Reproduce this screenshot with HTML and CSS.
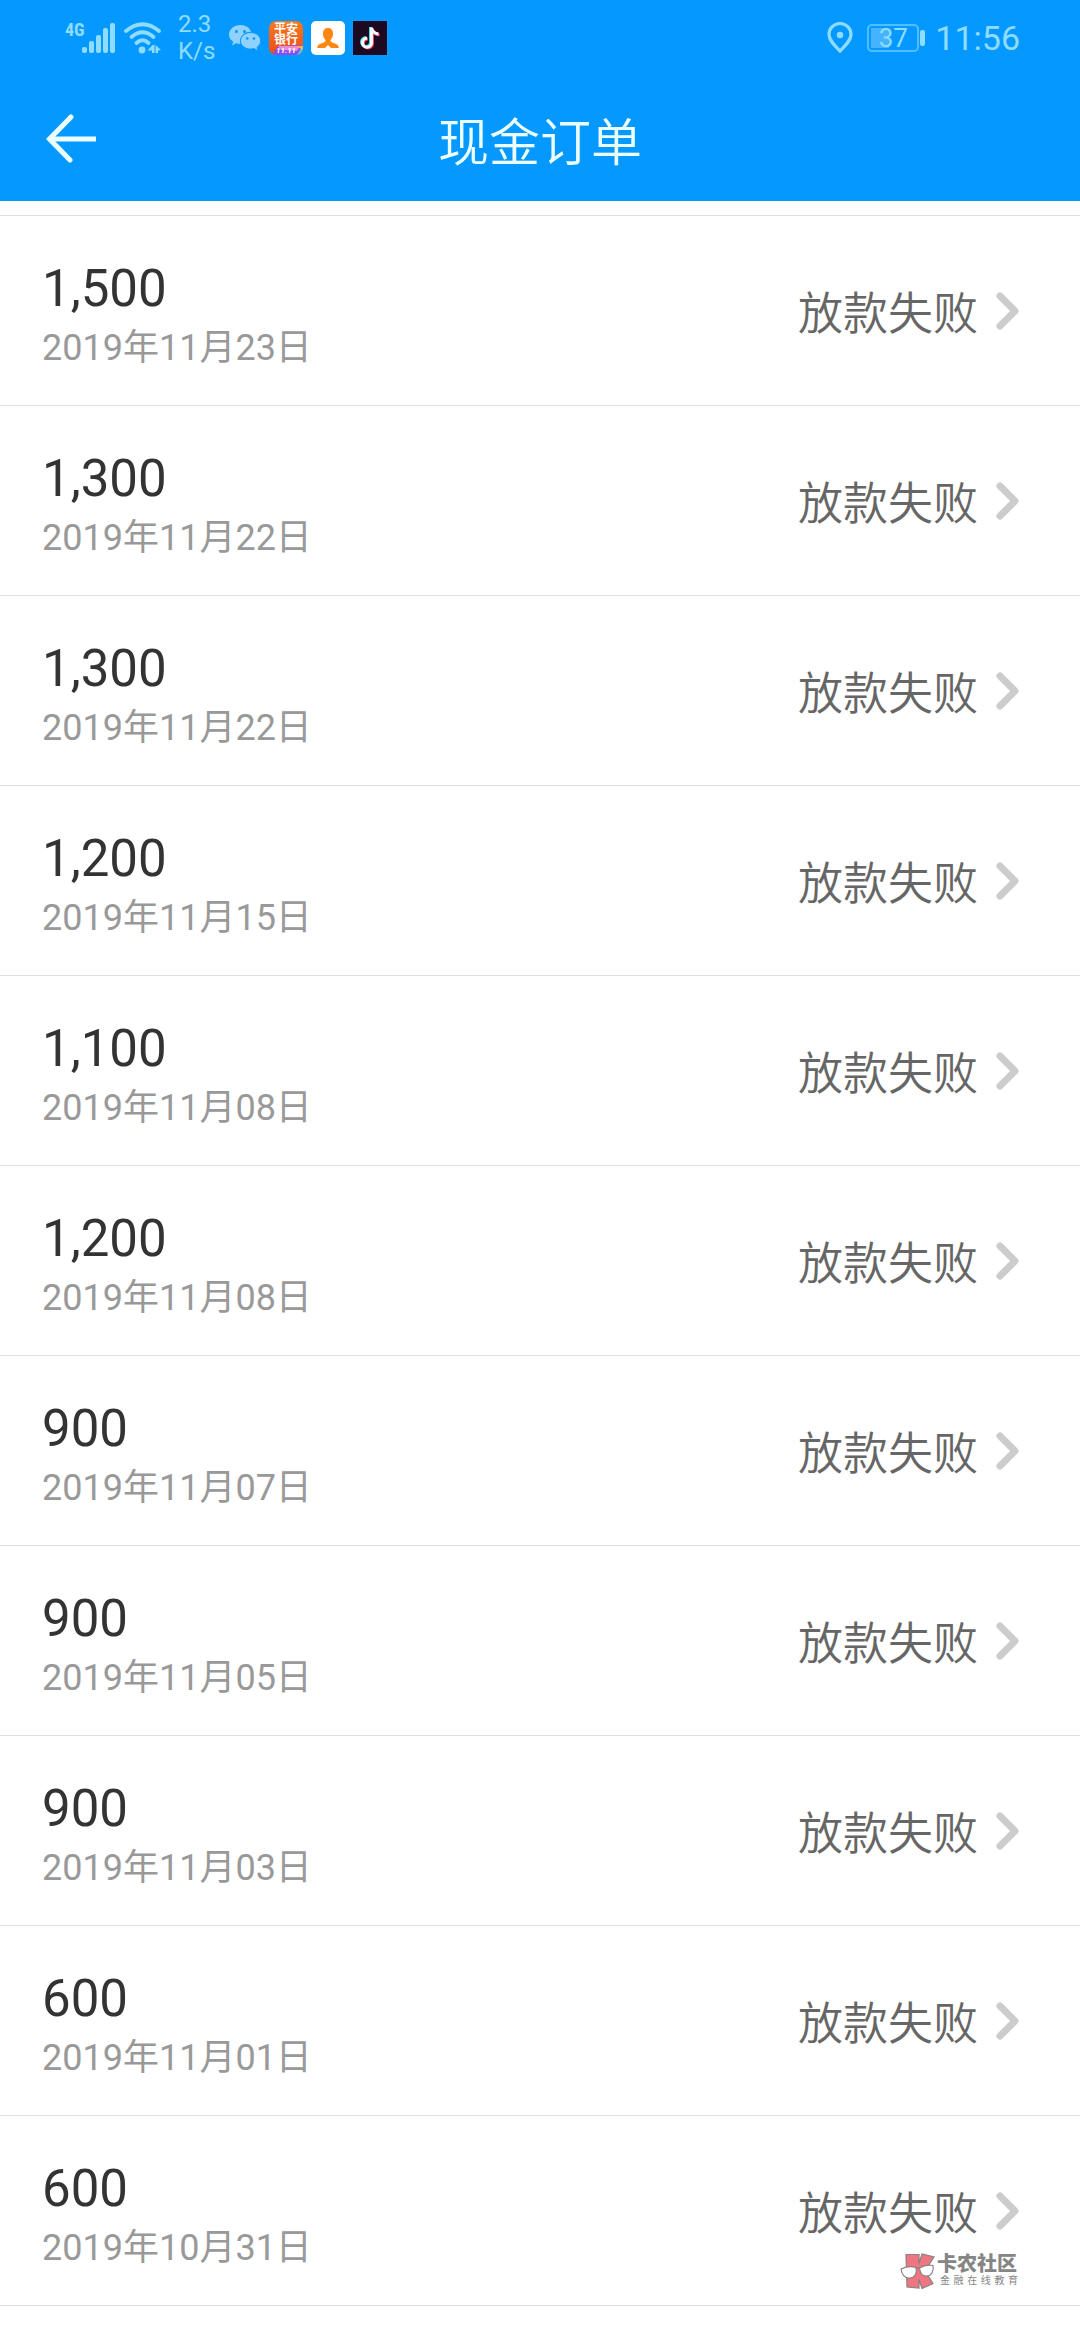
FILE: index.html
```html
<!DOCTYPE html>
<html lang="zh-CN">
<head>
<meta charset="utf-8">
<meta name="viewport" content="width=device-width, initial-scale=1">
<title>现金订单</title>
<link rel="stylesheet" href="styles.css">
</head>
<body>
<header class="top">
  <div class="status-bar">
    <div class="status-left">
      <div class="signal">
        <span class="network">4G</span>
        <svg width="34" height="32" viewBox="0 0 34 32" fill="currentColor" aria-hidden="true">
          <rect x="0" y="25" width="5" height="6" rx="2"/><rect x="7" y="19" width="5" height="12" rx="2"/><rect x="14" y="13" width="5" height="18" rx="2"/><rect x="21" y="6" width="5" height="25" rx="2"/><rect x="28" y="1" width="5" height="30" rx="2"/>
        </svg>
      </div>
      <svg class="wifi" width="38" height="32" viewBox="0 0 38 32" aria-hidden="true">
        <g fill="none" stroke="currentColor" stroke-width="3.800" stroke-linecap="round"><path d="M2 9Q18.500-4.500 35 9"/><path d="M7.500 15Q18.500 5.500 29.500 15"/><path d="M12.500 21Q18.500 15.500 24.500 21"/></g>
        <g fill="currentColor"><circle cx="18" cy="28" r="3.400"/><path d="M23.500 28.500l5-5.500h2v8h-2.500v-2.500zM31.500 23l5.500 5-3 .5V31h-2.500z"/></g>
      </svg>
      <div class="speed">2.3<br>K/s</div>
      <div class="app-icons">
        <svg class="wechat" width="32" height="28" viewBox="0 0 32 28" aria-hidden="true">
          <path fill="#8fd2ff" d="M11.500 1C5.200 1 0 5.200 0 10.500c0 3 1.700 5.600 4.200 7.300L3 21.500l4.200-2.200c1.400.4 2.800.6 4.300.6A9.500 9.500 0 0 1 22 8C21 4 16.700 1 11.500 1z"/>
          <path fill="#8fd2ff" stroke="#0599ff" stroke-width="1" d="M21.500 8.500c-5.500 0-10 3.700-10 8.300s4.500 8.300 10 8.300c1.200 0 2.400-.2 3.500-.5l4 2.400-1-3.600c2.200-1.500 3.700-3.900 3.700-6.600 0-4.600-4.600-8.300-10.200-8.300z"/>
          <g fill="#0599ff"><circle cx="7.500" cy="7.500" r="1.500"/><circle cx="15.500" cy="7.500" r="1.500"/><circle cx="18.300" cy="14.500" r="1.300"/><circle cx="25" cy="14.500" r="1.300"/></g>
        </svg>
        <svg width="34" height="34" viewBox="0 0 34 34" aria-hidden="true">
          <defs><linearGradient id="bank" x1="0" y1="0" x2="0" y2="1"><stop offset="0" stop-color="#f47a20"/><stop offset="1" stop-color="#f04c16"/></linearGradient><clipPath id="bank-shape"><rect width="34" height="34" rx="7"/></clipPath></defs>
          <g clip-path="url(#bank-shape)"><rect width="34" height="34" fill="url(#bank)"/><path fill="#8a4df0" d="M3 34l6-9 25-1v10z"/><path fill="#ee8ad0" d="M9 25h22l-3 5-16-1z"/><path fill="#50c8dc" d="M34 24l-6 10h6z"/><path fill="#ffb640" d="M27 25h7v4z"/></g>
          <g fill="#fff" font-weight="700" text-anchor="middle"><text class="bank-name" x="17" y="12">平安</text><text class="bank-name" x="17" y="23">银行</text><text class="bank-sale" x="17" y="32">11.11</text></g>
        </svg>
        <svg width="34" height="34" viewBox="0 0 34 34" aria-hidden="true">
          <rect width="34" height="34" rx="5" fill="#fff"/>
          <path fill="#ff8610" d="M17 7c3 0 5 2 5 5.500 0 3-1 5-2.500 6.500 0 2 1.500 2.500 4.500 3.500 2.500.8 3.600 2 3.800 4.500H20l-3-3-3 3H6.200c.2-2.500 1.300-3.700 3.800-4.500 3-1 4.500-1.500 4.500-3.500C13 17.500 12 15.500 12 12.500 12 9 14 7 17 7z"/>
        </svg>
        <svg width="34" height="34" viewBox="0 0 34 34" aria-hidden="true">
          <rect width="34" height="34" fill="#1d0a20"/>
          <g fill="none" stroke-width="3"><path stroke="#35e0e2" d="M17.500 6v15a4.500 4.500 0 1 1-4.500-4.500M17.500 7c.8 3.500 3 5.500 7 6"/><path stroke="#f5405c" d="M19.500 7.500V22.500a4.500 4.500 0 1 1-4.500-4.500M19.500 8c.8 3.500 3 5.500 7 6"/><path stroke="#fff" d="M18.500 6.500v15.200a4.500 4.500 0 1 1-4.500-4.500M18.500 7c.8 3.500 3 5.500 7 6"/></g>
        </svg>
      </div>
    </div>
    <div class="status-right">
      <svg width="26" height="32" viewBox="0 0 26 32" aria-hidden="true"><path fill="none" stroke="currentColor" stroke-width="3.200" d="M13 29C7.500 23.500 2 18.500 2 12.500a11 11 0 0 1 22 0c0 6-5.500 11-11 16.500z"/><circle cx="13" cy="13" r="3.200" fill="currentColor"/></svg>
      <div class="battery"><span class="battery-level">37</span></div>
      <time class="clock">11:56</time>
    </div>
  </div>
  <div class="title-bar">
    <button class="back" type="button" aria-label="返回">
      <svg width="50" height="50" viewBox="0 0 50 50" fill="none" stroke="#ecffff" stroke-width="5" aria-hidden="true"><path stroke-linecap="round" d="M25 3L3.500 25 24 46"/><path d="M4 25h46"/></svg>
    </button>
    <h1 class="title">现金订单</h1>
  </div>
</header>
<main>
  <ul class="orders">
    <li><a class="order" href="#"><span class="info"><span class="amount">1,500</span><span class="date">2019年11月23日</span></span><span class="state">放款失败</span><svg class="chevron" viewBox="0 0 24 38"><path d="M4 4l15 15L4 34"/></svg></a></li>
    <li><a class="order" href="#"><span class="info"><span class="amount">1,300</span><span class="date">2019年11月22日</span></span><span class="state">放款失败</span><svg class="chevron" viewBox="0 0 24 38"><path d="M4 4l15 15L4 34"/></svg></a></li>
    <li><a class="order" href="#"><span class="info"><span class="amount">1,300</span><span class="date">2019年11月22日</span></span><span class="state">放款失败</span><svg class="chevron" viewBox="0 0 24 38"><path d="M4 4l15 15L4 34"/></svg></a></li>
    <li><a class="order" href="#"><span class="info"><span class="amount">1,200</span><span class="date">2019年11月15日</span></span><span class="state">放款失败</span><svg class="chevron" viewBox="0 0 24 38"><path d="M4 4l15 15L4 34"/></svg></a></li>
    <li><a class="order" href="#"><span class="info"><span class="amount">1,100</span><span class="date">2019年11月08日</span></span><span class="state">放款失败</span><svg class="chevron" viewBox="0 0 24 38"><path d="M4 4l15 15L4 34"/></svg></a></li>
    <li><a class="order" href="#"><span class="info"><span class="amount">1,200</span><span class="date">2019年11月08日</span></span><span class="state">放款失败</span><svg class="chevron" viewBox="0 0 24 38"><path d="M4 4l15 15L4 34"/></svg></a></li>
    <li><a class="order" href="#"><span class="info"><span class="amount">900</span><span class="date">2019年11月07日</span></span><span class="state">放款失败</span><svg class="chevron" viewBox="0 0 24 38"><path d="M4 4l15 15L4 34"/></svg></a></li>
    <li><a class="order" href="#"><span class="info"><span class="amount">900</span><span class="date">2019年11月05日</span></span><span class="state">放款失败</span><svg class="chevron" viewBox="0 0 24 38"><path d="M4 4l15 15L4 34"/></svg></a></li>
    <li><a class="order" href="#"><span class="info"><span class="amount">900</span><span class="date">2019年11月03日</span></span><span class="state">放款失败</span><svg class="chevron" viewBox="0 0 24 38"><path d="M4 4l15 15L4 34"/></svg></a></li>
    <li><a class="order" href="#"><span class="info"><span class="amount">600</span><span class="date">2019年11月01日</span></span><span class="state">放款失败</span><svg class="chevron" viewBox="0 0 24 38"><path d="M4 4l15 15L4 34"/></svg></a></li>
    <li><a class="order" href="#"><span class="info"><span class="amount">600</span><span class="date">2019年10月31日</span></span><span class="state">放款失败</span><svg class="chevron" viewBox="0 0 24 38"><path d="M4 4l15 15L4 34"/></svg></a></li>
  </ul>
</main>
<div class="watermark">
  <svg width="36" height="36" viewBox="0 0 36 36" stroke="#8a8183" stroke-width="1.200" aria-hidden="true">
    <path fill="#ee7680" d="M6 1.500h13v9l3-9.500 12 3-9 14 8 12.500-11 5-3-9v8.500L7 34z"/>
    <path fill="#fff" d="M1 16c4-2 10-3 15-1.500 1.500 5-1 10-6 10.500S2 22 1 16zM19.500 15c4-2.500 9-3.500 13.500-2.500 1 5-1 10-6 10.500-4.500.3-7-3-7.500-8z"/><path fill="none" d="M16 16q2-2 3.500-.5"/>
  </svg>
  <div class="watermark-text"><span class="brand">卡农社区</span><span class="tagline">金融在线教育</span></div>
</div>
</body>
</html>
```
FILE: styles.css
```css
* {
  box-sizing: border-box;
}

body {
  margin: 0;
  min-height: 100vh;
  position: relative;
  background: #fff;
  color: #333;
  font-family: Roboto, "Noto Sans CJK SC", sans-serif;
}

svg {
  display: block;
  flex: none;
}

.top {
  background: #0599ff;
}

/* System status bar */
.status-bar {
  display: flex;
  align-items: center;
  justify-content: space-between;
  height: 76px;
  padding: 0 60px 0 65px;
  color: #8edcff;
}

.status-left,
.status-right,
.app-icons,
.signal {
  display: flex;
  align-items: center;
}

.network {
  align-self: flex-start;
  width: 17px;
  font: 700 18px/16px "Roboto Condensed", "Liberation Sans Narrow", sans-serif;
}

.wifi {
  margin-left: 8px;
}

.speed {
  width: 51px;
  margin-left: 16px;
  font-size: 24px;
  line-height: 27px;
}

.app-icons {
  gap: 8px;
}

.bank-name {
  font-size: 12px;
}

.bank-sale {
  font-size: 8px;
  font-style: italic;
}

.battery {
  position: relative;
  display: flex;
  align-items: center;
  justify-content: center;
  width: 52px;
  height: 28px;
  margin: 0 16px 0 14px;
  border: 2px solid #4fc0ff;
  border-radius: 5px;
  background: linear-gradient(#45b3ff, #45b3ff) 2px center / 18px 20px no-repeat;
}

.battery::after {
  content: "";
  position: absolute;
  left: 51px;
  top: 4px;
  width: 5px;
  height: 16px;
  border-radius: 2px;
  background: #8edcff;
}

.battery-level {
  font-size: 26px;
  line-height: 26px;
}

.clock {
  font-size: 34px;
  line-height: 40px;
}

/* Page title */
.title-bar {
  display: grid;
  grid-template-columns: 100px 1fr 100px;
  align-items: center;
  height: 125px;
}

.back {
  width: 100px;
  padding: 0 0 0 46px;
  border: 0;
  background: none;
}

.title {
  margin: 0;
  color: #ecffff;
  font-family: "Noto Sans CJK SC", sans-serif;
  font-size: 51px;
  font-weight: 350;
  line-height: 60px;
  text-align: center;
}

/* Orders */
.orders {
  margin: 14px 0 0;
  padding: 0;
  border-top: 1px solid #e0e0e0;
  list-style: none;
}

.order {
  display: flex;
  align-items: center;
  padding: 36px 60px 35px 42px;
  border-bottom: 1px solid #e0e0e0;
  color: inherit;
  text-decoration: none;
}

.info {
  display: flex;
  flex: 1;
  flex-direction: column;
}

.amount {
  font-size: 51px;
  line-height: 74px;
}

.date {
  color: #999;
  font-size: 36px;
  line-height: 44px;
}

.state {
  color: #666;
  font-family: "Noto Sans CJK SC", sans-serif;
  font-size: 45px;
  font-weight: 350;
  line-height: 54px;
}

.chevron {
  width: 24px;
  height: 38px;
  margin-left: 18px;
  fill: none;
  stroke: #ccc;
  stroke-width: 7;
  stroke-linecap: round;
  stroke-linejoin: round;
}

.watermark {
  position: absolute;
  right: 62px;
  bottom: 51px;
  display: flex;
  align-items: center;
  gap: 1px;
  color: #858585;
}

.watermark-text {
  display: flex;
  flex-direction: column;
  width: 81px;
}

.brand {
  font-size: 20px;
  font-weight: 900;
  line-height: 20px;
}

.tagline {
  padding-left: 3px;
  font-size: 10px;
  line-height: 14px;
  text-align-last: justify;
}
```
